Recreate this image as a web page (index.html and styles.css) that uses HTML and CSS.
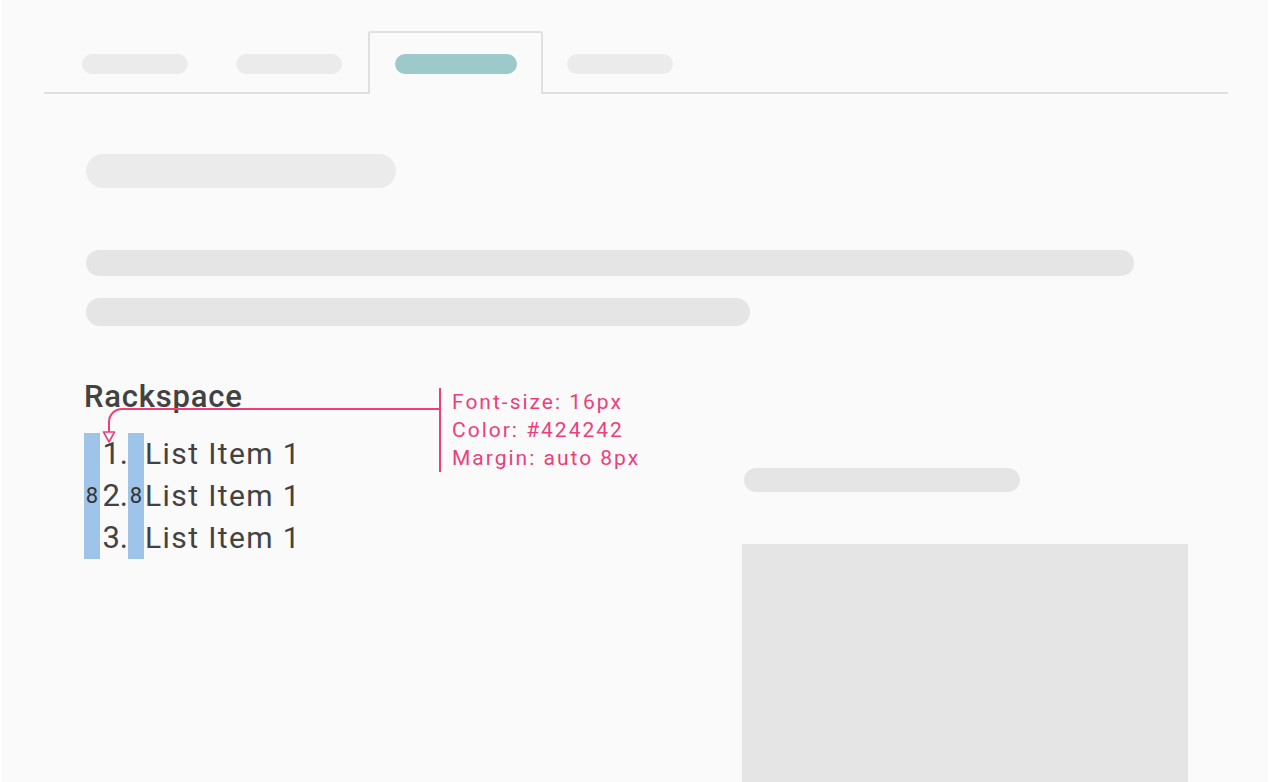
FILE: index.html
```html
<!DOCTYPE html>
<html lang="en">
<head>
<meta charset="utf-8">
<title>Rackspace spec</title>
<link rel="stylesheet" href="styles.css">
</head>
<body>
<div class="page">
  <div class="tabs">
    <div class="tab tab-first"><span class="pill"></span></div>
    <div class="tab"><span class="pill"></span></div>
    <div class="tab tab-active"><span class="pill pill-active"></span></div>
    <div class="tab tab-last"><span class="pill"></span></div>
  </div>
  <div class="content">
    <div class="sk-title"></div>
    <div class="sk-line sk-line-1"></div>
    <div class="sk-line sk-line-2"></div>
    <div class="lower">
      <div class="spec">
        <h2 class="heading">Rackspace</h2>
        <div class="list">
          <div class="gap-bar"><span class="gap-label">8</span></div>
          <div class="nums">
            <span>1.</span>
            <span>2.</span>
            <span>3.</span>
          </div>
          <div class="gap-bar"><span class="gap-label">8</span></div>
          <div class="items">
            <span>List Item 1</span>
            <span>List Item 1</span>
            <span>List Item 1</span>
          </div>
        </div>
        <div class="note">
          <div>Font-size: 16px</div>
          <div>Color: #424242</div>
          <div>Margin: auto 8px</div>
        </div>
        <svg class="pointer" width="360" height="70" viewBox="0 0 360 70">
          <path d="M356 28 H38 A13 13 0 0 0 25 41 V51" fill="none" stroke="#ec407a" stroke-width="2"/>
          <path d="M19.5 51 H30.5 L25 61 Z" fill="#fafafa" stroke="#ec407a" stroke-width="1.6" stroke-linejoin="round"/>
        </svg>
      </div>
      <div class="aside">
        <div class="sk-aside-line"></div>
        <div class="sk-block"></div>
      </div>
    </div>
  </div>
</div>
</body>
</html>
```

FILE: styles.css
```css
* { box-sizing: border-box; }
html, body { margin: 0; padding: 0; background: #ffffff; }
body { font-family: Roboto, "Noto Sans", Arial, sans-serif; color: #424242; }

.page {
  margin: 0 2px;
  height: 782px;
  background: #fafafa;
  overflow: hidden;
  padding-top: 31px;
}

.tabs {
  display: flex;
  height: 63px;
  margin: 0 40px 0 42px;
  padding-left: 14px;
  border-bottom: 2px solid #e0e0e0;
}
.tab {
  height: 61px;
  padding: 23px 24px 0;
}
.tab-active {
  height: 63px;
  margin-left: 2px;
  margin-bottom: -2px;
  padding: 21px 24px 0 25px;
  border: 2px solid #e0e0e0;
  border-bottom: 0;
  border-radius: 3px 3px 0 0;
  background: #fafafa;
}
.tab-last { padding-left: 24px; }
.pill {
  display: block;
  width: 106px;
  height: 20px;
  border-radius: 10px;
  background: #ebebeb;
}
.pill-active {
  width: 122px;
  background: #9ec9cb;
}

.content {
  padding: 0 80px 0 84px;
}
.sk-title {
  width: 310px;
  height: 34px;
  margin-top: 60px;
  border-radius: 17px;
  background: #ebebeb;
}
.sk-line {
  border-radius: 14px;
  background: #e5e5e5;
}
.sk-line-1 { width: 1048px; height: 26px; margin-top: 62px; }
.sk-line-2 { width: 664px; height: 28px; margin-top: 22px; }

.lower {
  display: flex;
  margin-top: 55px;
}
.spec {
  position: relative;
  flex: 1;
}
.heading {
  margin: 0 0 20px -2px;
  font-size: 31px;
  line-height: 32px;
  font-weight: 500;
  letter-spacing: 0.8px;
  color: #424242;
}
.list {
  display: flex;
  margin-left: -2px;
  font-size: 30px;
  line-height: 42px;
  letter-spacing: 1.4px;
  color: #424242;
}
.gap-bar {
  width: 16px;
  display: flex;
  align-items: center;
  justify-content: center;
  background: #9fc4ea;
}
.gap-label {
  font-size: 22px;
  line-height: 22px;
  letter-spacing: 0;
  color: #333333;
}
.nums {
  display: flex;
  flex-direction: column;
  align-items: flex-end;
  width: 28px;
  letter-spacing: 0;
  font-size: 31px;
}
.items {
  display: flex;
  flex-direction: column;
  padding-left: 1px;
}

.note {
  position: absolute;
  left: 353px;
  top: 7px;
  padding-left: 11px;
  border-left: 2px solid #ec407a;
  font-size: 21px;
  line-height: 28px;
  letter-spacing: 2px;
  color: #ec407a;
  white-space: nowrap;
}
.pointer {
  position: absolute;
  left: -2px;
  top: 0;
  overflow: visible;
}

.aside {
  width: 446px;
  padding-top: 87px;
}
.sk-aside-line {
  width: 276px;
  height: 24px;
  margin-left: 2px;
  border-radius: 12px;
  background: #e5e5e5;
}
.sk-block {
  height: 300px;
  margin-top: 52px;
  background: #e5e5e5;
}
```
